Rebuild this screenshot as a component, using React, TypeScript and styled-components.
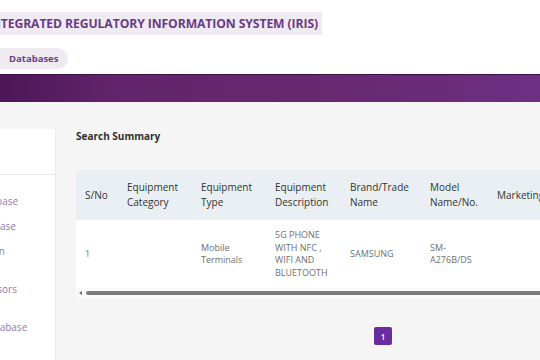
import React from "react";
import styled, { createGlobalStyle } from "styled-components";

const GlobalStyle = createGlobalStyle`
  html, body { margin: 0; padding: 0; background: #f5f5f5; }
  body { font-family: "Open Sans", "Noto Sans", sans-serif; }
  * { box-sizing: border-box; }
`;

const Page = styled.div`
  width: 540px;
  height: 360px;
  overflow: hidden;
  background: #f5f5f5;
  display: flex;
  flex-direction: column;
`;

const TopBar = styled.header`
  background: #ffffff;
  padding-top: 12px;
  display: flex;
  flex-direction: column;
  align-items: flex-start;
  gap: 13px;
  height: 74px;
`;

const TitlePill = styled.div`
  margin-left: -19px;
  padding: 0 4px 0 6px;
  height: 23px;
  display: flex;
  align-items: center;
  background: #f0ebf2;
  color: #6b3a86;
  font-weight: 700;
  font-size: 12.2px;
  letter-spacing: -0.1px;
  white-space: nowrap;
`;

const NavPill = styled.div`
  margin-left: -6px;
  padding: 0 10px 0 15px;
  height: 21px;
  display: flex;
  align-items: center;
  background: #efebf0;
  border-radius: 0 11px 11px 0;
  color: #6b3f86;
  font-weight: 700;
  font-size: 9.5px;
`;

const Band = styled.div`
  height: 28px;
  flex-shrink: 0;
  border-top: 1px solid #3f1048;
  background: linear-gradient(90deg, #4c1756 0%, #62246c 22%, #68286f 55%, #6a2c7b 85%, #6d3083 100%);
`;

const Body = styled.div`
  display: flex;
  padding-top: 27px;
  flex: 1;
  min-height: 0;
`;

const Sidebar = styled.aside`
  width: 166px;
  margin-left: -110px;
  flex-shrink: 0;
  background: #ffffff;
  border-right: 1px solid #ececec;
`;

const SidebarHead = styled.div`
  height: 46px;
  border-bottom: 1px solid #e8e8e8;
`;

const SideList = styled.ul`
  list-style: none;
  margin: 0;
  padding: 14px 0 0 15px;
`;

const SideItem = styled.li`
  color: #9878b0;
  font-size: 10px;
  line-height: 13px;
  padding: 6px 0;
  white-space: nowrap;
`;

const Main = styled.main`
  flex: 1;
  min-width: 0;
  padding-left: 20px;
`;

const SectionTitle = styled.h2`
  margin: 0;
  font-size: 10px;
  line-height: 14px;
  font-weight: 700;
  color: #2f2f2f;
`;

const TableWrap = styled.div`
  margin-top: 27px;
  width: 560px;
  background: #ffffff;
`;

const Table = styled.table`
  border-collapse: collapse;
  table-layout: fixed;
  width: 560px;
`;

const Th = styled.th<{ $w: number }>`
  width: ${(p) => p.$w}px;
  height: 50px;
  background: #e9eff2;
  text-align: left;
  vertical-align: middle;
  padding: 0 4px 0 9px;
  font-weight: 500;
  font-size: 10px;
  line-height: 15px;
  color: #333333;
`;

const Td = styled.td`
  height: 68px;
  text-align: left;
  vertical-align: middle;
  padding: 0 4px 0 9px;
  font-size: 9px;
  line-height: 12.5px;
  color: #6f6f6f;
  background: #ffffff;
`;

const ScrollTrack = styled.div`
  height: 10px;
  display: flex;
  align-items: center;
  gap: 4px;
  padding-left: 3px;
  background: #fafafa;
`;

const ScrollArrow = styled.span`
  width: 0;
  height: 0;
  border-top: 2px solid transparent;
  border-bottom: 2px solid transparent;
  border-right: 3px solid #6a6a6a;
`;

const ScrollThumb = styled.div`
  flex: 1;
  height: 4px;
  border-radius: 2px;
  background: #7b7b7b;
`;

const Pagination = styled.nav`
  margin-top: 29px;
  padding-left: 298px;
  display: flex;
`;

const PageButton = styled.button<{ $active?: boolean }>`
  width: 18px;
  height: 18px;
  border: none;
  border-radius: 2px;
  padding: 0;
  background: ${(p) => (p.$active ? "#6a2c9f" : "transparent")};
  color: #ffffff;
  font-family: inherit;
  font-size: 8px;
  font-weight: 600;
  display: flex;
  align-items: center;
  justify-content: center;
`;

const columns = [
  { label: "S/No", w: 42 },
  { label: "Equipment Category", w: 74 },
  { label: "Equipment Type", w: 74 },
  { label: "Equipment Description", w: 75 },
  { label: "Brand/Trade Name", w: 80 },
  { label: "Model Name/No.", w: 67 },
  { label: "Marketing Name", w: 148 },
];

const row = ["1", "", "Mobile Terminals", "5G PHONE WITH NFC , WIFI AND BLUETOOTH", "SAMSUNG", "SM- A276B/DS", ""];

const sideItems: string[][] = [
  ["Type Approval Database"],
  ["Dealer Permit Database"],
  ["Spectrum Application", "Form"],
  ["Accredited RF Assessors", "List"],
  ["Numbering Plan Database"],
];

export default function App() {
  return (
    <>
      <GlobalStyle />
      <Page>
        <TopBar>
          <TitlePill>INTEGRATED REGULATORY INFORMATION SYSTEM (IRIS)</TitlePill>
          <NavPill>Databases</NavPill>
        </TopBar>
        <Band />
        <Body>
          <Sidebar>
            <SidebarHead />
            <SideList>
              {sideItems.map((lines, i) => (
                <SideItem key={i}>
                  {lines.map((l, j) => (
                    <div key={j}>{l}</div>
                  ))}
                </SideItem>
              ))}
            </SideList>
          </Sidebar>
          <Main>
            <SectionTitle>Search Summary</SectionTitle>
            <TableWrap>
              <Table>
                <thead>
                  <tr>
                    {columns.map((c) => (
                      <Th key={c.label} $w={c.w}>
                        {c.label}
                      </Th>
                    ))}
                  </tr>
                </thead>
                <tbody>
                  <tr>
                    {row.map((v, i) => (
                      <Td key={i}>{v}</Td>
                    ))}
                  </tr>
                </tbody>
              </Table>
              <ScrollTrack>
                <ScrollArrow />
                <ScrollThumb />
              </ScrollTrack>
            </TableWrap>
            <Pagination>
              <PageButton $active>1</PageButton>
            </Pagination>
          </Main>
        </Body>
      </Page>
    </>
  );
}
